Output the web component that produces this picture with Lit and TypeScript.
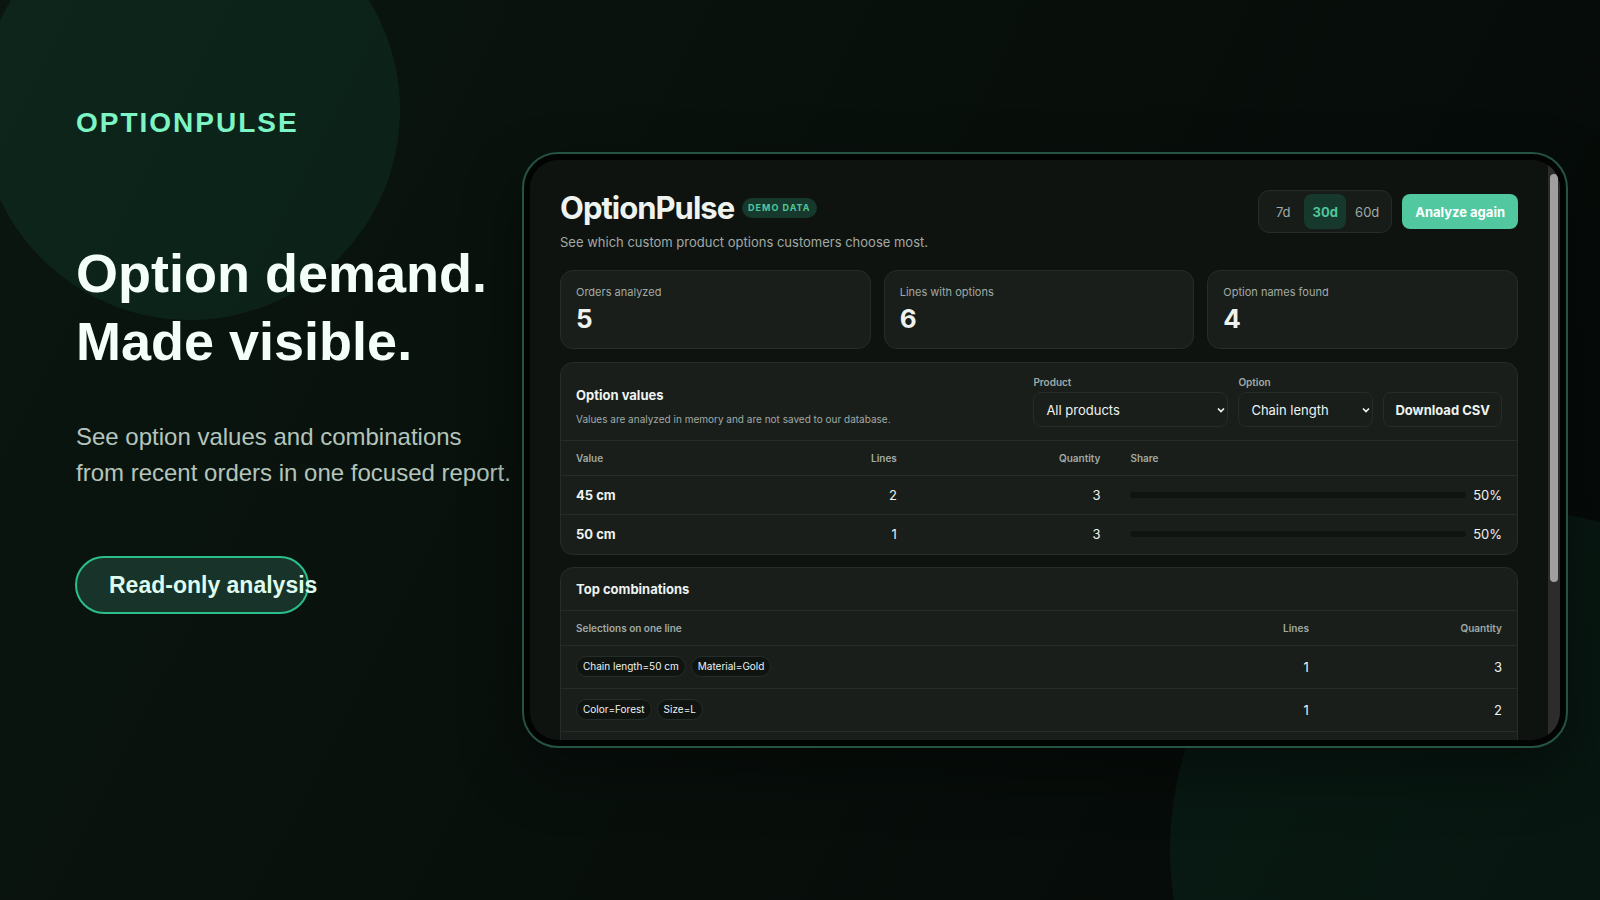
import { LitElement, html, css } from "lit";
import { customElement, property, state } from "lit/decorators.js";
import { classMap } from "lit/directives/class-map.js";

interface ValueRow {
  value: string;
  lines: number;
  quantity: number;
  share: number;
}

interface ComboRow {
  selections: string[];
  lines: number;
  quantity: number;
}

@customElement("option-report")
export class OptionReport extends LitElement {
  static styles = css`
    :host {
      display: block;
      padding: 30px;
      color: #eef3f0;
      font-family: Inter, "Liberation Sans", sans-serif;
      font-size: 13px;
      line-height: 16px;
    }
    * {
      box-sizing: border-box;
    }
    h1,
    h2,
    p {
      margin: 0;
    }
    button,
    select {
      font: inherit;
      color: inherit;
      margin: 0;
    }
    .head {
      display: flex;
      justify-content: space-between;
      align-items: flex-start;
      margin-bottom: 20px;
    }
    .title {
      display: flex;
      align-items: center;
      gap: 8px;
    }
    h1 {
      font-size: 31px;
      line-height: 35px;
      font-weight: 700;
      letter-spacing: -1px;
    }
    .badge {
      padding: 0 6px;
      border-radius: 10px;
      background: #17382c;
      color: #4fc79d;
      font-size: 9px;
      line-height: 20px;
      font-weight: 700;
      letter-spacing: 1px;
    }
    .sub {
      margin-top: 9px;
      color: #a1aaa5;
    }
    .actions {
      display: flex;
      align-items: center;
      gap: 10px;
    }
    .range {
      display: flex;
      padding: 3px;
      border: 1px solid #262c29;
      border-radius: 11px;
      background: #171c19;
    }
    .range button {
      width: 42px;
      height: 35px;
      padding: 0;
      border: 0;
      border-radius: 8px;
      background: none;
      color: #a1aaa5;
    }
    .range button.on {
      background: #17382c;
      color: #4fc79d;
      font-weight: 700;
    }
    .primary {
      height: 35px;
      padding: 0 13px;
      border: 0;
      border-radius: 8px;
      background: #52c8a0;
      color: #fff;
      font-weight: 700;
    }
    .stats {
      display: grid;
      grid-template-columns: repeat(3, 1fr);
      gap: 13px;
      margin-bottom: 13px;
    }
    .stat,
    .panel {
      border: 1px solid #262c29;
      border-radius: 13px;
      background: #191e1b;
    }
    .stat {
      padding: 13px 15px 14px;
    }
    .stat-label {
      color: #a1aaa5;
      font-size: 11px;
    }
    .stat-value {
      margin-top: 3px;
      font-size: 26px;
      line-height: 31px;
      font-weight: 700;
    }
    .panel {
      margin-bottom: 12px;
      overflow: hidden;
    }
    .panel-head {
      display: flex;
      justify-content: space-between;
      align-items: center;
      padding: 12px 15px;
    }
    .with-filters {
      padding-bottom: 13px;
    }
    h2 {
      font-size: 13px;
      line-height: 18px;
      font-weight: 700;
    }
    .note {
      margin-top: 7px;
      color: #a1aaa5;
      font-size: 10px;
    }
    .intro {
      padding-top: 11px;
    }
    .filters {
      display: flex;
      align-items: flex-end;
      gap: 10px;
    }
    .field {
      display: grid;
      gap: 3px;
    }
    .field label {
      color: #a1aaa5;
      font-size: 10px;
      line-height: 14px;
      font-weight: 600;
    }
    .select {
      position: relative;
      display: grid;
    }
    select {
      appearance: none;
      height: 35px;
      padding: 0 12px;
      border: 1px solid #262c29;
      border-radius: 8px;
      background: #191e1b;
    }
    .product {
      width: 195px;
    }
    .option {
      width: 135px;
    }
    .select svg {
      position: absolute;
      right: 2px;
      top: 13px;
      width: 10px;
      height: 10px;
      pointer-events: none;
    }
    .secondary {
      height: 35px;
      padding: 0 11px;
      border: 1px solid #262c29;
      border-radius: 8px;
      background: #191e1b;
      font-weight: 700;
    }
    table {
      width: 100%;
      table-layout: fixed;
      border-collapse: collapse;
    }
    th,
    td {
      height: 39px;
      padding: 0 15px;
      border-top: 1px solid #262c29;
      text-align: left;
      font-weight: 400;
    }
    thead th {
      height: 35px;
      color: #a1aaa5;
      font-size: 10px;
      font-weight: 600;
    }
    tbody th {
      font-weight: 700;
    }
    .combos td {
      height: 43px;
    }
    .num {
      text-align: right;
    }
    .c-value {
      width: 15.7%;
    }
    .c-lines {
      width: 21%;
    }
    .c-share {
      width: 42%;
    }
    .c-small {
      width: 20.2%;
    }
    .share {
      display: flex;
      align-items: center;
      gap: 7px;
    }
    .track {
      flex: 1;
      height: 6px;
      border-radius: 3px;
      background: #101411;
    }
    .chips {
      display: flex;
      gap: 5px;
    }
    .chip {
      padding: 0 6px;
      border: 1px solid #262c29;
      border-radius: 11px;
      background: #0f1411;
      font-size: 10px;
      line-height: 19px;
    }
  `;

  @property({ attribute: false }) ranges = ["7d", "30d", "60d"];
  @state() private range = "30d";

  private stats: [string, number][] = [
    ["Orders analyzed", 5],
    ["Lines with options", 6],
    ["Option names found", 4],
  ];

  private values: ValueRow[] = [
    { value: "45 cm", lines: 2, quantity: 3, share: 50 },
    { value: "50 cm", lines: 1, quantity: 3, share: 50 },
  ];

  private combos: ComboRow[] = [
    { selections: ["Chain length=50 cm", "Material=Gold"], lines: 1, quantity: 3 },
    { selections: ["Color=Forest", "Size=L"], lines: 1, quantity: 2 },
  ];

  private chevron() {
    return html`<svg viewBox="0 0 10 10" aria-hidden="true">
      <path d="M2 3.5 L5 6.5 L8 3.5" fill="none" stroke="#eef3f0" stroke-width="1.7" />
    </svg>`;
  }

  render() {
    return html`
      <header class="head">
        <div>
          <div class="title">
            <h1>OptionPulse</h1>
            <span class="badge">DEMO DATA</span>
          </div>
          <p class="sub">See which custom product options customers choose most.</p>
        </div>
        <div class="actions">
          <div class="range" role="group" aria-label="Period">
            ${this.ranges.map(
              (r) => html`<button
                class=${classMap({ on: r === this.range })}
                @click=${() => (this.range = r)}
              >${r}</button>`
            )}
          </div>
          <button class="primary">Analyze again</button>
        </div>
      </header>

      <section class="stats">
        ${this.stats.map(
          ([label, value]) => html`<div class="stat">
            <div class="stat-label">${label}</div>
            <div class="stat-value">${value}</div>
          </div>`
        )}
      </section>

      <section class="panel">
        <div class="panel-head with-filters">
          <div class="intro">
            <h2>Option values</h2>
            <p class="note">Values are analyzed in memory and are not saved to our database.</p>
          </div>
          <div class="filters">
            <div class="field">
              <label for="product">Product</label>
              <div class="select">
                <select id="product" class="product"><option>All products</option></select>
                ${this.chevron()}
              </div>
            </div>
            <div class="field">
              <label for="option">Option</label>
              <div class="select">
                <select id="option" class="option"><option>Chain length</option></select>
                ${this.chevron()}
              </div>
            </div>
            <button class="secondary">Download CSV</button>
          </div>
        </div>
        <table>
          <thead>
            <tr>
              <th class="c-value">Value</th>
              <th class="c-lines num">Lines</th>
              <th class="num">Quantity</th>
              <th class="c-share">Share</th>
            </tr>
          </thead>
          <tbody>
            ${this.values.map(
              (v) => html`<tr>
                <th scope="row">${v.value}</th>
                <td class="num">${v.lines}</td>
                <td class="num">${v.quantity}</td>
                <td><div class="share"><span class="track"></span>${v.share}%</div></td>
              </tr>`
            )}
          </tbody>
        </table>
      </section>

      <section class="panel">
        <div class="panel-head"><h2>Top combinations</h2></div>
        <table class="combos">
          <thead>
            <tr>
              <th>Selections on one line</th>
              <th class="c-small num">Lines</th>
              <th class="c-small num">Quantity</th>
            </tr>
          </thead>
          <tbody>
            ${this.combos.map(
              (c) => html`<tr>
                <td>
                  <div class="chips">${c.selections.map((s) => html`<span class="chip">${s}</span>`)}</div>
                </td>
                <td class="num">${c.lines}</td>
                <td class="num">${c.quantity}</td>
              </tr>`
            )}
            <tr><td></td><td></td><td></td></tr>
          </tbody>
        </table>
      </section>
    `;
  }
}

@customElement("app-root")
export class AppRoot extends LitElement {
  static styles = css`
    :host {
      display: block;
      font-family: "Liberation Sans", Arial, sans-serif;
    }
    * {
      box-sizing: border-box;
    }
    .stage {
      position: relative;
      display: grid;
      grid-template-columns: 447px minmax(0, 1fr);
      min-height: 100vh;
      padding: 0 32px 0 75px;
      overflow: hidden;
      background: linear-gradient(117deg, #0b1610 0%, #050907 100%);
    }
    .backdrop {
      position: absolute;
      inset: 0;
      width: 100%;
      height: 100%;
    }
    .copy {
      position: relative;
      padding: 107px 0 64px;
      white-space: nowrap;
    }
    h1,
    p {
      margin: 0;
    }
    .brand {
      padding-left: 1px;
      color: #7cf4c4;
      font-size: 28px;
      line-height: 32px;
      font-weight: 700;
      letter-spacing: 2px;
    }
    h1 {
      margin-top: 100px;
      padding-left: 1px;
      color: #f5fffa;
      font-size: 54px;
      line-height: 68px;
      font-weight: 700;
    }
    .lead {
      margin-top: 44px;
      padding-left: 1px;
      color: #b4c5bc;
      font-size: 24px;
      line-height: 36px;
    }
    .pill {
      width: 234px;
      margin-top: 65px;
      padding-left: 32px;
      border: 2px solid #2bbd8a;
      border-radius: 29px;
      background: #18332a;
      color: #dffbee;
      font-size: 23px;
      line-height: 54px;
      font-weight: 700;
    }
    .frame {
      position: relative;
      align-self: center;
      padding: 6px;
      border: 2px solid #255442;
      border-radius: 36px;
      background: #020404;
      box-shadow: 0 24px 60px rgba(0, 0, 0, 0.4);
    }
    .screen {
      display: flex;
      height: 580px;
      border-radius: 28px;
      overflow: hidden;
      background: #0f1310;
    }
    .report {
      flex: 1;
      min-width: 0;
    }
    .scrollbar {
      width: 12px;
      padding: 14px 2px;
      background: #2c2c2c;
    }
    .thumb {
      height: 74%;
      border-radius: 4px;
      background: #9f9f9f;
    }
  `;

  render() {
    return html`
      <main class="stage">
        <svg class="backdrop" viewBox="0 0 1600 900" preserveAspectRatio="xMidYMid slice" aria-hidden="true">
          <circle cx="190" cy="110" r="210" fill="#22a07a" fill-opacity="0.11" />
          <circle cx="1510" cy="850" r="340" fill="#22a070" fill-opacity="0.09" />
        </svg>
        <section class="copy">
          <div class="brand">OPTIONPULSE</div>
          <h1>Option demand.<br />Made visible.</h1>
          <p class="lead">See option values and combinations<br />from recent orders in one focused report.</p>
          <div class="pill">Read-only analysis</div>
        </section>
        <section class="frame">
          <div class="screen">
            <option-report class="report"></option-report>
            <div class="scrollbar"><div class="thumb"></div></div>
          </div>
        </section>
      </main>
    `;
  }
}
